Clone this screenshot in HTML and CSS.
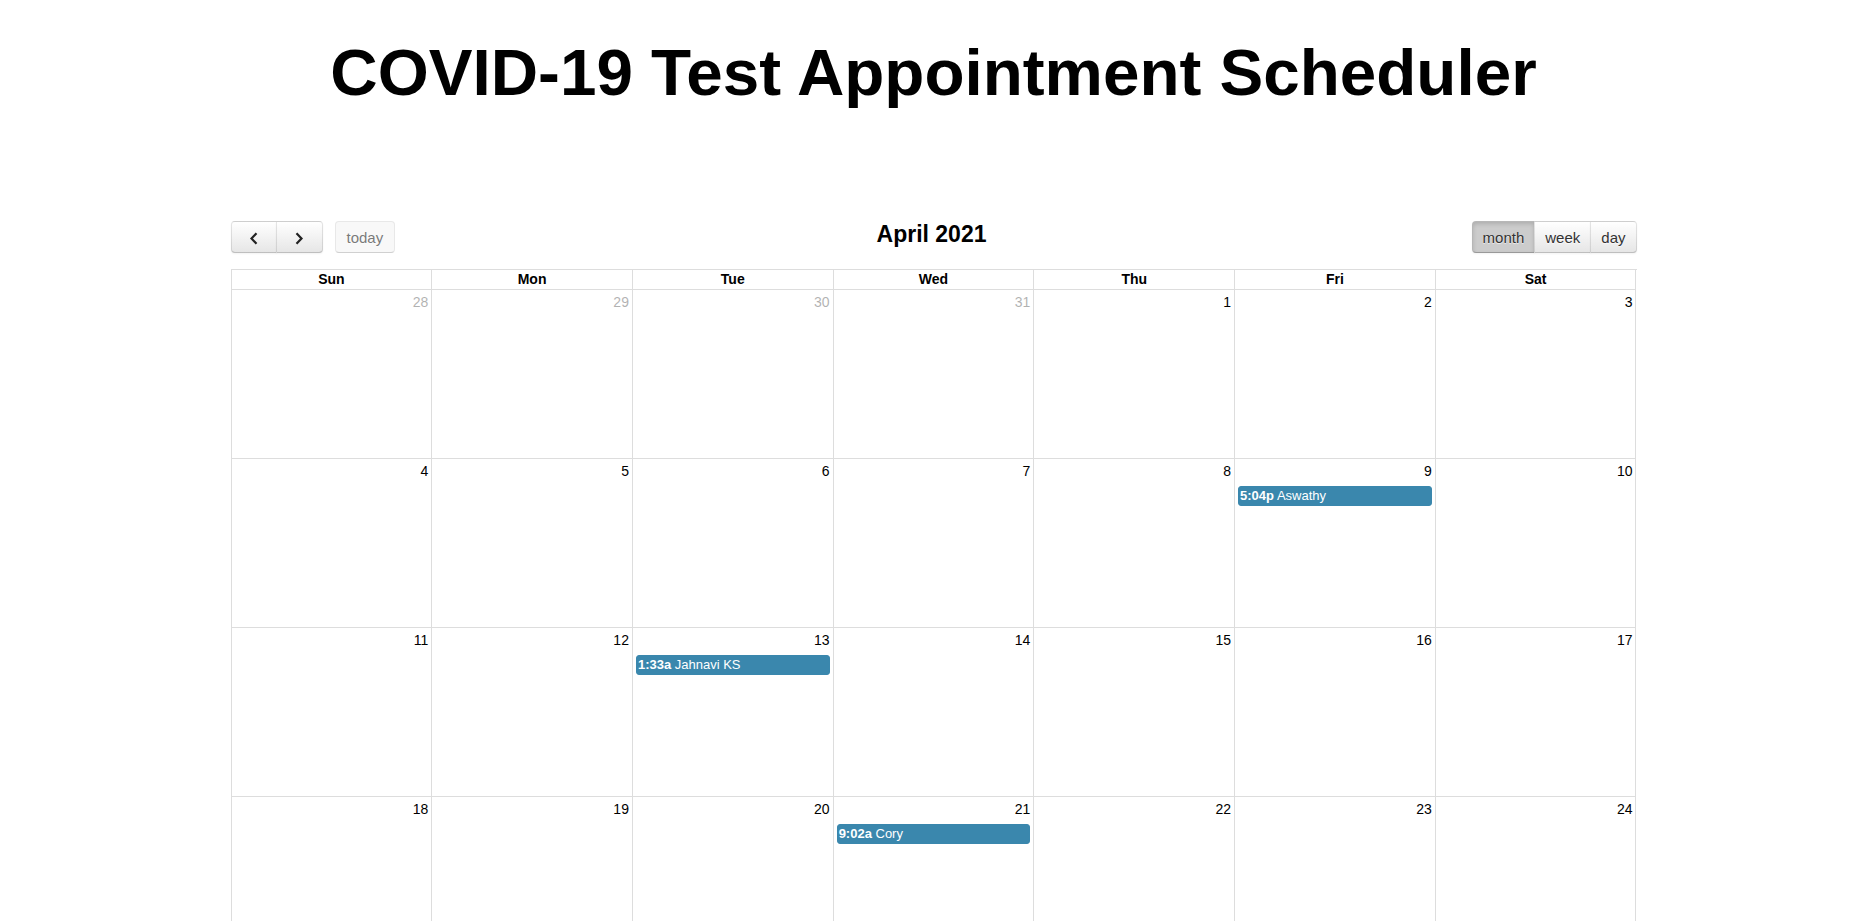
FILE: index.html
```html
<!DOCTYPE html>
<html lang="en">
<head>
<meta charset="utf-8">
<title>COVID-19 Test Appointment Scheduler</title>
<link rel="stylesheet" href="styles.css">
</head>
<body>
<h1 class="page-title">COVID-19 Test Appointment Scheduler</h1>
<div class="calendar">
  <div class="toolbar">
    <div class="toolbar-left">
      <div class="btn-group">
        <button class="btn btn-icon" type="button" aria-label="prev"><svg width="10" height="13" viewBox="0 0 10 13"><polyline points="7.5,1.2 2.5,6.5 7.5,11.8" fill="none" stroke="#222" stroke-width="2.2"/></svg></button>
        <button class="btn btn-icon" type="button" aria-label="next"><svg width="10" height="13" viewBox="0 0 10 13"><polyline points="2.5,1.2 7.5,6.5 2.5,11.8" fill="none" stroke="#222" stroke-width="2.2"/></svg></button>
      </div>
      <button class="btn btn-single btn-disabled" type="button">today</button>
    </div>
    <h2 class="toolbar-title">April 2021</h2>
    <div class="toolbar-right">
      <div class="btn-group">
        <button class="btn btn-active" type="button">month</button>
        <button class="btn" type="button">week</button>
        <button class="btn" type="button">day</button>
      </div>
    </div>
  </div>
  <div class="grid grid-head">
    <div class="head-cell">Sun</div>
    <div class="head-cell">Mon</div>
    <div class="head-cell">Tue</div>
    <div class="head-cell">Wed</div>
    <div class="head-cell">Thu</div>
    <div class="head-cell">Fri</div>
    <div class="head-cell">Sat</div>
  </div>
  <div class="grid grid-body">
    <div class="day other"><span class="day-num">28</span></div>
    <div class="day other"><span class="day-num">29</span></div>
    <div class="day other"><span class="day-num">30</span></div>
    <div class="day other"><span class="day-num">31</span></div>
    <div class="day"><span class="day-num">1</span></div>
    <div class="day"><span class="day-num">2</span></div>
    <div class="day"><span class="day-num">3</span></div>

    <div class="day"><span class="day-num">4</span></div>
    <div class="day"><span class="day-num">5</span></div>
    <div class="day"><span class="day-num">6</span></div>
    <div class="day"><span class="day-num">7</span></div>
    <div class="day"><span class="day-num">8</span></div>
    <div class="day"><span class="day-num">9</span><div class="event"><span class="event-time">5:04p</span> Aswathy</div></div>
    <div class="day"><span class="day-num">10</span></div>

    <div class="day"><span class="day-num">11</span></div>
    <div class="day"><span class="day-num">12</span></div>
    <div class="day"><span class="day-num">13</span><div class="event"><span class="event-time">1:33a</span> Jahnavi KS</div></div>
    <div class="day"><span class="day-num">14</span></div>
    <div class="day"><span class="day-num">15</span></div>
    <div class="day"><span class="day-num">16</span></div>
    <div class="day"><span class="day-num">17</span></div>

    <div class="day"><span class="day-num">18</span></div>
    <div class="day"><span class="day-num">19</span></div>
    <div class="day"><span class="day-num">20</span></div>
    <div class="day"><span class="day-num">21</span><div class="event"><span class="event-time">9:02a</span> Cory</div></div>
    <div class="day"><span class="day-num">22</span></div>
    <div class="day"><span class="day-num">23</span></div>
    <div class="day"><span class="day-num">24</span></div>

    <div class="day"><span class="day-num">25</span></div>
    <div class="day"><span class="day-num">26</span></div>
    <div class="day"><span class="day-num">27</span></div>
    <div class="day"><span class="day-num">28</span></div>
    <div class="day"><span class="day-num">29</span></div>
    <div class="day"><span class="day-num">30</span></div>
    <div class="day other"><span class="day-num">1</span></div>

    <div class="day other"><span class="day-num">2</span></div>
    <div class="day other"><span class="day-num">3</span></div>
    <div class="day other"><span class="day-num">4</span></div>
    <div class="day other"><span class="day-num">5</span></div>
    <div class="day other"><span class="day-num">6</span></div>
    <div class="day other"><span class="day-num">7</span></div>
    <div class="day other"><span class="day-num">8</span></div>
  </div>
</div>
</body>
</html>
```
FILE: styles.css
```css
* {
  box-sizing: border-box;
}

html, body {
  margin: 0;
  padding: 0;
  background: #fff;
  color: #000;
  font-family: "Liberation Sans", Arial, sans-serif;
  font-size: 14px;
}

.page-title {
  margin: 0;
  padding-top: 35px;
  font-size: 65.6px;
  line-height: 75px;
  font-weight: bold;
  text-align: center;
}

.calendar {
  width: 1406px;
  margin: 111px auto 40px;
}

.toolbar {
  display: grid;
  grid-template-columns: 1fr auto 1fr;
  align-items: start;
  height: 32px;
  margin-bottom: 16px;
}

.toolbar-left {
  display: flex;
  gap: 12px;
}

.toolbar-right {
  display: flex;
  justify-content: flex-end;
}

.toolbar-title {
  margin: 0;
  padding-right: 4px;
  font-size: 23px;
  line-height: 26px;
  font-weight: bold;
}

.btn-group {
  display: flex;
}

.btn {
  height: 32px;
  padding: 0 11px;
  margin: 0;
  font-family: "Liberation Sans", Arial, sans-serif;
  font-size: 15px;
  color: #333;
  border: 1px solid;
  border-color: rgba(0,0,0,.1) rgba(0,0,0,.1) rgba(0,0,0,.25);
  background-color: #f5f5f5;
  background-image: linear-gradient(to bottom, #fff, #e6e6e6);
  text-shadow: 0 1px 1px rgba(255,255,255,.75);
  box-shadow: inset 0 1px 0 rgba(255,255,255,.2), 0 1px 2px rgba(0,0,0,.05);
  border-radius: 0;
  cursor: pointer;
  display: flex;
  align-items: center;
  justify-content: center;
}

.toolbar-right .btn {
  padding: 0 10px;
}

.btn-group .btn + .btn {
  margin-left: -1px;
}

.btn-group .btn:first-child {
  border-radius: 4px 0 0 4px;
}

.btn-group .btn:last-child {
  border-radius: 0 4px 4px 0;
}

.btn-single {
  border-radius: 4px;
}

.btn-icon {
  width: 46px;
  padding: 0;
}

.btn-icon + .btn-icon {
  width: 47px;
}

.btn-icon svg {
  display: block;
  margin-top: 2px;
}

.btn-disabled {
  opacity: .65;
  background-image: none;
  box-shadow: none;
  cursor: default;
}

.btn-active {
  background-color: #ccc;
  background-image: none;
  box-shadow: inset 0 2px 4px rgba(0,0,0,.15), 0 1px 2px rgba(0,0,0,.05);
}

.grid {
  display: grid;
  grid-template-columns: repeat(7, 1fr);
  border-left: 1px solid #ddd;
}

.grid-head {
  border-top: 1px solid #ddd;
}

.head-cell {
  height: 20px;
  line-height: 19px;
  text-align: center;
  font-weight: bold;
  font-size: 14px;
  border-right: 1px solid #ddd;
  border-bottom: 1px solid #ddd;
}

.grid-body {
  grid-auto-rows: 169px;
}

.day {
  border-right: 1px solid #ddd;
  border-bottom: 1px solid #ddd;
  display: flex;
  flex-direction: column;
  min-width: 0;
}

.day-num {
  display: block;
  text-align: right;
  padding: 2px 3px 2px 2px;
  line-height: 20px;
  font-size: 14px;
}

.other .day-num {
  opacity: .3;
}

.event {
  margin: 3px 3px 0 3px;
  padding: 0 1px;
  background: #3a87ad;
  border: 1px solid #3a87ad;
  border-radius: 3px;
  color: #fff;
  font-size: 13px;
  line-height: 18px;
  white-space: nowrap;
  overflow: hidden;
}

.event-time {
  font-weight: bold;
}
```
